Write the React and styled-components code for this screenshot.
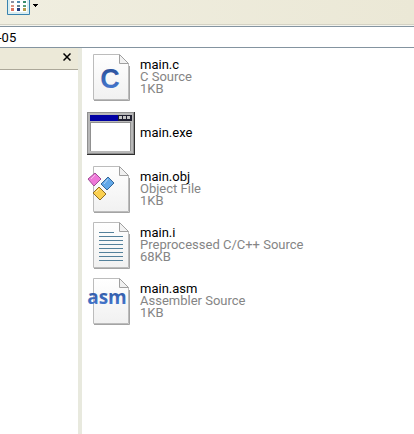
import styled, { createGlobalStyle } from "styled-components";

const GlobalStyle = createGlobalStyle`
  * {
    box-sizing: border-box;
  }

  body {
    margin: 0;
    background: #ffffff;
    font-family: Roboto, "Liberation Sans", Arial, sans-serif;
    font-size: 13px;
    line-height: 12px;
    color: #000000;
  }
`;

const Window = styled.div`
  display: flex;
  flex-direction: column;
  height: 100vh;
  overflow: hidden;
`;

const Toolbar = styled.div`
  display: flex;
  align-items: flex-start;
  flex: none;
  height: 25px;
  padding-left: 7px;
  background: linear-gradient(to right, #f0eee0, #ebe8d6);
  border-bottom: 1px solid #d4d2c4;
`;

const ViewButton = styled.button`
  display: flex;
  align-items: flex-start;
  gap: 3px;
  padding: 0;
  border: none;
  background: none;
  cursor: pointer;
`;

const AddressBar = styled.div`
  flex: none;
  height: 23px;
  padding-top: 1px;
  background: #f4f4ee;
`;

const AddressInput = styled.input`
  display: block;
  width: 100%;
  height: 22px;
  padding: 0;
  border: solid #8494a0;
  border-width: 1px 0;
  border-radius: 0;
  outline: none;
  background: #ffffff;
  font: inherit;
  text-indent: -2px;
`;

const Content = styled.div`
  display: flex;
  flex: 1;
  min-height: 0;
`;

const Sidebar = styled.aside`
  flex: none;
  width: 82px;
  border-right: 4px solid #e8e9de;
`;

const SidebarHeader = styled.div`
  display: flex;
  justify-content: flex-end;
  align-items: center;
  height: 22px;
  padding-right: 7px;
  background: #ece9d8;
  border-bottom: 1px solid #aca899;
`;

const CloseButton = styled.button`
  display: flex;
  padding: 0;
  margin-bottom: 4px;
  border: none;
  background: none;
  cursor: pointer;
`;

const FileList = styled.ul`
  display: flex;
  flex-direction: column;
  gap: 8px;
  flex: 1;
  min-width: 0;
  margin: 0;
  padding: 5px;
  list-style: none;
`;

const FileItem = styled.li`
  display: flex;
  align-items: center;
  gap: 5px;
  height: 48px;
`;

const FileIcon = styled.svg`
  flex: none;
  width: 48px;
  height: 48px;
`;

const FileText = styled.div`
  white-space: nowrap;
`;

const FileName = styled.div`
  color: #000000;
`;

const FileDetail = styled.div`
  color: #858585;
`;

const Page = () => (
  <>
    <path d="M7 47.5H42.5V13" fill="none" stroke="#a4a4a4" />
    <path d="M6.5 1.5H32L41.5 11V46.5H6.5Z" fill="url(#paper)" stroke="#bcbcbc" />
    <path d="M32.5 1.5V10.5H41.5Z" fill="#f1f1f1" stroke="#a0a0a0" />
  </>
);

const SourceIcon = () => (
  <FileIcon viewBox="0 0 48 48" aria-hidden="true">
    <Page />
    <text
      x="23"
      y="35"
      textAnchor="middle"
      fontFamily="Liberation Sans"
      fontSize="27"
      fontWeight="bold"
      fill="url(#blue)"
    >
      C
    </text>
  </FileIcon>
);

const ProgramIcon = () => (
  <FileIcon viewBox="0 0 48 48" aria-hidden="true">
    <rect x="0" y="3" width="48" height="43" fill="#303030" />
    <rect x="0" y="3" width="47" height="42" fill="#909090" />
    <rect x="1" y="4" width="45" height="40" fill="#b8b8b8" />
    <rect x="3" y="6" width="42" height="6" fill="#0000a4" />
    <rect x="31" y="6" width="14" height="6" fill="#202030" />
    <path d="M32 7h3v3h-3zM36 7h3v3h-3zM40 7h3v3h-3z" fill="#c8c8c8" />
    <rect x="3" y="13" width="41" height="29" fill="#909090" />
    <rect x="4" y="14" width="39" height="28" fill="#ffffff" />
  </FileIcon>
);

const ObjectIcon = () => (
  <FileIcon viewBox="0 0 48 48" aria-hidden="true">
    <Page />
    <path d="M8 8L14 14L7 21L1 14Z" fill="#ee78d8" stroke="#a04c96" />
    <path d="M21 12L27 18L20 25L14 19Z" fill="#62a8e8" stroke="#356696" />
    <path d="M12 22L19 29L13 35L6 28Z" fill="#fbd050" stroke="#8c6d28" />
    <path d="M4 14L8 10M17 19L21 14M9 27L12 24" stroke="#ffffff" opacity="0.5" />
  </FileIcon>
);

const TextIcon = () => (
  <FileIcon viewBox="0 0 48 48" aria-hidden="true">
    <Page />
    <path
      d="M12 11.5H27M12 15.5H36M12 19.5H36M12 23.5H36M12 27.5H36M12 31.5H36M12 35.5H36M12 39.5H36"
      stroke="#54819b"
    />
  </FileIcon>
);

const AssemblerIcon = () => (
  <FileIcon viewBox="0 0 48 48" aria-hidden="true">
    <Page />
    <text
      x="20"
      y="27"
      textAnchor="middle"
      fontFamily="Open Sans"
      fontSize="19"
      fontWeight="bold"
      fill="url(#blue)"
    >
      asm
    </text>
  </FileIcon>
);

const IconColors = () => (
  <svg width="0" height="0" style={{ position: "absolute" }} aria-hidden="true">
    <defs>
      <linearGradient id="paper" x1="0" y1="0" x2="0" y2="1">
        <stop offset="0" stopColor="#ffffff" />
        <stop offset="1" stopColor="#f1f1f1" />
      </linearGradient>
      <linearGradient id="blue" x1="0" y1="0" x2="0" y2="1">
        <stop offset="0" stopColor="#264990" />
        <stop offset="1" stopColor="#4c82dc" />
      </linearGradient>
    </defs>
  </svg>
);

const files = [
  { name: "main.c", type: "C Source", size: "1KB", Icon: SourceIcon },
  { name: "main.exe", Icon: ProgramIcon },
  { name: "main.obj", type: "Object File", size: "1KB", Icon: ObjectIcon },
  { name: "main.i", type: "Preprocessed C/C++ Source", size: "68KB", Icon: TextIcon },
  { name: "main.asm", type: "Assembler Source", size: "1KB", Icon: AssemblerIcon },
];

const App = () => {
  return (
    <Window>
      <GlobalStyle />
      <IconColors />
      <Toolbar>
        <ViewButton type="button" aria-label="Views">
          <svg width="23" height="15" viewBox="0 0 23 15">
            <path d="M0.5 0V14.5H22.5V0" fill="#d9edf0" stroke="#3882ae" />
            <path d="M3 0H20V12H3Z" fill="#ffffff" />
            <path d="M4 1h3v2h-3z" fill="#8d91a2" />
            <path d="M10 1h3v2h-3z" fill="#4f8bb0" />
            <path d="M16 1h3v2h-3z" fill="#398c6b" />
            <path d="M4 5h3v2h-3z" fill="#dc9580" />
            <path d="M10 5h3v2h-3z" fill="#6b8490" />
            <path d="M16 5h3v2h-3z" fill="#5a9d7a" />
            <path d="M4 8h3v3h-3z" fill="#db7461" />
            <path d="M10 8h3v3h-3z" fill="#233d80" />
            <path d="M16 8h3v3h-3z" fill="#b59b49" />
          </svg>
          <svg width="5" height="8" viewBox="0 0 5 8" shapeRendering="crispEdges">
            <path d="M0 4h5v1h-5zM1 5h3v1h-3zM2 6h1v1h-1z" fill="#000000" />
          </svg>
        </ViewButton>
      </Toolbar>
      <AddressBar>
        <AddressInput type="text" aria-label="Address" defaultValue="-05" />
      </AddressBar>
      <Content>
        <Sidebar>
          <SidebarHeader>
            <CloseButton type="button" aria-label="Close">
              <svg width="8" height="8" viewBox="0 0 8 8">
                <path d="M0.5 0.5L7.5 7.5M7.5 0.5L0.5 7.5" stroke="#000000" strokeWidth="1.5" />
              </svg>
            </CloseButton>
          </SidebarHeader>
        </Sidebar>
        <FileList>
          {files.map(({ name, type, size, Icon }) => (
            <FileItem key={name}>
              <Icon />
              <FileText>
                <FileName>{name}</FileName>
                {type && <FileDetail>{type}</FileDetail>}
                {size && <FileDetail>{size}</FileDetail>}
              </FileText>
            </FileItem>
          ))}
        </FileList>
      </Content>
    </Window>
  );
};

export default App;
